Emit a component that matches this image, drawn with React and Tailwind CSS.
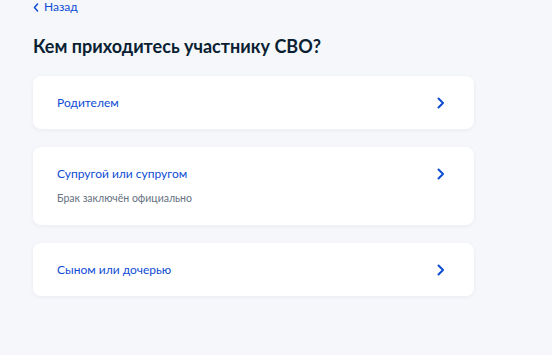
import React from 'react';

const options = [
  { title: 'Родителем' },
  { title: 'Супругой или супругом', note: 'Брак заключён официально' },
  { title: 'Сыном или дочерью' },
];

function Chevron() {
  return (
    <svg width="8" height="12" viewBox="0 0 8 12" fill="none">
      <path d="M1.5 1.5L6 6l-4.5 4.5" stroke="#0d4cd3" strokeWidth="2" strokeLinecap="round" strokeLinejoin="round" />
    </svg>
  );
}

export default function App() {
  return (
    <div className="min-h-[355px] w-[552px] bg-[#f5f7fb] pl-[33px] pt-0" style={{ fontFamily: 'Lato, "Noto Sans", sans-serif' }}>
      <div className="flex items-center gap-[5px] pt-0 h-[14px] text-[12px] text-[#0d4cd3]">
        <svg width="6" height="9" viewBox="0 0 6 9" fill="none">
          <path d="M4.5 1L1.5 4.5 4.5 8" stroke="#0d4cd3" strokeWidth="1.5" strokeLinecap="round" strokeLinejoin="round" />
        </svg>
        <span>Назад</span>
      </div>
      <h1 className="mt-[21px] text-[18px] font-bold leading-[22px] text-[#0b1f33]">Кем приходитесь участнику СВО?</h1>
      <div className="mt-[19px] flex w-[441px] flex-col gap-[18px]">
        {options.map(o => (
          <div key={o.title} className="flex items-start justify-between rounded-[8px] bg-white pl-[24px] pr-[29px] py-[19px] shadow-[0_1px_4px_rgba(11,31,51,0.06)]">
            <div>
              <div className="text-[12px] leading-[15px] text-[#0d4cd3]">{o.title}</div>
              {o.note && <div className="mt-[10px] text-[10.5px] leading-[15px] text-[#66727f]">{o.note}</div>}
            </div>
            <div className="pt-[2px]"><Chevron /></div>
          </div>
        ))}
      </div>
    </div>
  );
}
